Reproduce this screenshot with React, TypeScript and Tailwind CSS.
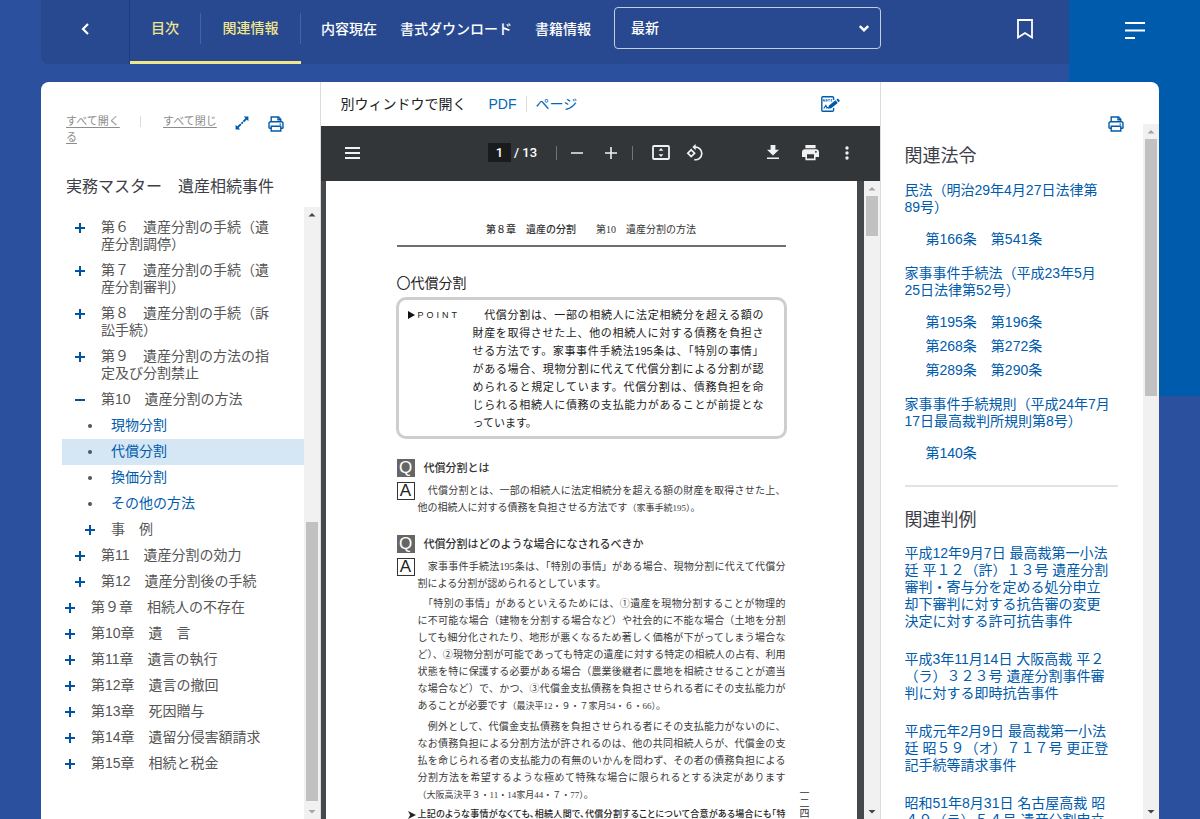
import React from "react";

const ui = "font-['Liberation_Sans','Noto_Sans_CJK_JP',sans-serif]";
const mincho = "font-['Liberation_Serif','Noto_Sans_CJK_JP',serif]";

function PrintIcon() {
  return (
    <svg width="16" height="16" viewBox="0 0 16 16" fill="none" stroke="#005bac" strokeWidth="1.4" aria-hidden="true">
      <path d="M3.2 5.8V1h7.4l2.200 2.200v2.600" />
      <path d="M10 1v2.800h2.600" />
      <path d="M3.200 12.200H1.800c-.5 0-.8-.3-.8-.8V7.600c0-1 .8-1.800 1.800-1.800h10.400c1 0 1.800.8 1.800 1.800v3.800c0 .5-.3.8-.8.800h-1.400" />
      <path d="M3.200 10.200h9.600V15H3.200z" />
      <path d="M11.600 8.200h1.200" />
    </svg>
  );
}

function ExpandIcon() {
  return (
    <svg width="14" height="14" viewBox="0 0 14 14" aria-hidden="true">
      <path d="M8.800.600h4.600v4.600zM.600 8.800v4.600h4.600z" fill="#005bac" />
      <path d="M2.500 11.500l9-9" stroke="#005bac" strokeWidth="1.800" strokeDasharray="4.800 .8 2 .8" fill="none" />
    </svg>
  );
}

function NoteIcon() {
  return (
    <svg width="20" height="16" viewBox="0 0 20 16" fill="none" aria-hidden="true">
      <path d="M12.600 4V2c0-.8-.5-1.200-1.200-1.200H1.800C1.200.8.8 1.200.8 1.800v12.400c0 .6.400 1 1 1h9.600c.7 0 1.200-.4 1.200-1.200V12" stroke="#005bac" strokeWidth="1.400" />
      <path d="M2.500 3.400v2M2.500 3.400l1.200 2v-2M5 3.600h1.200v1.600H5zM7.300 3.500h1.500M8 3.500v2M9.800 3.500h1.400M9.800 5.200h1.400M9.800 4.400h1" stroke="#005bac" strokeWidth=".7" />
      <path d="M2.800 12.500l2-3 1.200 2.400 1.600-.6" stroke="#005bac" strokeWidth="1.200" />
      <path d="M7 12.800l.9-3.300 6.600-5.200 2.300 2.700-6.600 5.200zM15.300 3.700l1-.8c.4-.3.800-.2 1.100.1l1.100 1.300c.3.400.3.800-.1 1.100l-.9.800z" fill="#005bac" />
    </svg>
  );
}

function PlusIcon({ minus = false }: { minus?: boolean }) {
  return (
    <svg width="10" height="10" viewBox="0 0 10 10" fill="none" stroke="#0053a0" strokeWidth="2" aria-hidden="true">
      <path d={minus ? "M0 5h10" : "M0 5h10M5 0v10"} />
    </svg>
  );
}

function Arrow({ up = false, dark = false }: { up?: boolean; dark?: boolean }) {
  return (
    <svg className="shrink-0" width="16" height="15" viewBox="0 0 16 15" aria-hidden="true">
      <path d={up ? "M4.500 9.500h7L8 6z" : "M4.500 6h7L8 9.500z"} fill={dark ? "#444" : "#a3a3a3"} />
    </svg>
  );
}

function ScrollTrack({
  before,
  size,
  upDark = false,
  downDark = false,
}: {
  before: number;
  size: number;
  upDark?: boolean;
  downDark?: boolean;
}) {
  return (
    <div className="flex w-4 shrink-0 flex-col bg-[#f1f1f1]" aria-hidden="true">
      <Arrow up dark={upDark} />
      <div className="min-h-0 flex-1 px-[2px]">
        <div style={{ height: `${before}%` }} />
        <div className="bg-[#c1c1c1]" style={{ height: `${size}%` }} />
      </div>
      <Arrow dark={downDark} />
    </div>
  );
}

type Node = { level: 0 | 1 | 2; text: string; kind: "plus" | "minus" | "leaf"; active?: boolean };

const toc: Node[] = [
  { level: 1, kind: "plus", text: "第６　遺産分割の手続（遺\n産分割調停）" },
  { level: 1, kind: "plus", text: "第７　遺産分割の手続（遺\n産分割審判）" },
  { level: 1, kind: "plus", text: "第８　遺産分割の手続（訴\n訟手続）" },
  { level: 1, kind: "plus", text: "第９　遺産分割の方法の指\n定及び分割禁止" },
  { level: 1, kind: "minus", text: "第10　遺産分割の方法" },
  { level: 2, kind: "leaf", text: "現物分割" },
  { level: 2, kind: "leaf", text: "代償分割", active: true },
  { level: 2, kind: "leaf", text: "換価分割" },
  { level: 2, kind: "leaf", text: "その他の方法" },
  { level: 2, kind: "plus", text: "事　例" },
  { level: 1, kind: "plus", text: "第11　遺産分割の効力" },
  { level: 1, kind: "plus", text: "第12　遺産分割後の手続" },
  { level: 0, kind: "plus", text: "第９章　相続人の不存在" },
  { level: 0, kind: "plus", text: "第10章　遺　言" },
  { level: 0, kind: "plus", text: "第11章　遺言の執行" },
  { level: 0, kind: "plus", text: "第12章　遺言の撤回" },
  { level: 0, kind: "plus", text: "第13章　死因贈与" },
  { level: 0, kind: "plus", text: "第14章　遺留分侵害額請求" },
  { level: 0, kind: "plus", text: "第15章　相続と税金" },
];

const indent = { 0: "pl-[3px]", 1: "pl-[13px]", 2: "pl-[23px]" };

function TocRow({ node }: { node: Node }) {
  const base = `flex w-full items-start gap-4 pt-1 pb-[5px] text-left ${indent[node.level]}`;
  if (node.kind === "leaf") {
    return (
      <a href="#" className={`${base} text-[#005bac] ${node.active ? "bg-[#d5e7f5]" : ""}`}>
        <span className="flex h-[17px] w-[10px] items-center justify-center">
          <span className="size-1 rounded-full bg-[#555]" />
        </span>
        <span className="whitespace-pre">{node.text}</span>
      </a>
    );
  }
  return (
    <button type="button" className={`${base} text-[#555]`}>
      <span className="flex h-[17px] items-center">
        <PlusIcon minus={node.kind === "minus"} />
      </span>
      <span className="whitespace-pre">{node.text}</span>
    </button>
  );
}

function Sidebar() {
  return (
    <aside className="flex w-1/4 shrink-0 flex-col border-r border-[#dcdcdc] pl-[21px]">
      <div className="flex items-start pt-[31px] pl-1 text-[11px] leading-[16px] text-[#8c8c8c]">
        <button type="button" className="h-8 w-[56px] text-left underline underline-offset-2">すべて開くる</button>
        <span className="mt-[3px] ml-[18px] h-[11px] w-px bg-[#ddd]" />
        <button type="button" className="ml-[22px] h-4 w-[56px] overflow-hidden text-left underline underline-offset-2">すべて閉じ</button>
        <button type="button" aria-label="拡大" className="mt-[3px] ml-[16px]"><ExpandIcon /></button>
        <button type="button" aria-label="目次を印刷" className="mt-[3px] ml-[19px]"><PrintIcon /></button>
      </div>
      <h1 className="mt-[30px] pl-1 text-[16px] leading-6 text-[#3e3e48]">実務マスター　遺産相続事件</h1>
      <div className="mt-[8px] flex min-h-0 flex-1">
        <nav aria-label="目次" className="min-w-0 flex-1 overflow-hidden pt-[8px] text-[14px] leading-[17px]">
          {toc.map((n) => (
            <TocRow key={n.text} node={n} />
          ))}
        </nav>
        <ScrollTrack before={51.500} size={48} upDark />
      </div>
    </aside>
  );
}

function Lines({ lines }: { lines: React.ReactNode[] }) {
  return (
    <p className="whitespace-nowrap">
      {lines.map((l, i) => (
        <span key={i} className={i < lines.length - 1 ? "block [text-align-last:justify]" : "block"}>
          {l}
        </span>
      ))}
    </p>
  );
}

function Question({ children }: { children: React.ReactNode }) {
  return (
    <h3 className="flex items-center gap-[9px] text-[11px] leading-[18px] font-medium text-[#333]">
      <span className={`flex size-[18px] items-center justify-center bg-[#666] text-[17px] leading-[18px] font-normal text-white ${ui}`}>Q</span>
      {children}
    </h3>
  );
}

function Answer({ children }: { children: React.ReactNode }) {
  return (
    <div className="mt-[5px] flex gap-[3px]">
      <span className={`flex size-[18px] shrink-0 items-center justify-center border border-[#333] text-[17px] leading-4 text-[#222] ${ui}`}>A</span>
      <div className={`flex min-w-0 flex-1 flex-col gap-[3px] text-[10px] leading-[17px] text-[#3a3a3a] ${mincho}`}>{children}</div>
    </div>
  );
}

const Cite = ({ children }: { children: React.ReactNode }) => <small className="text-[9px]">{children}</small>;

function PdfPage() {
  return (
    <article className="flex min-w-0 flex-1 overflow-hidden bg-white pl-[71px]">
      <div className="min-w-0 flex-1 pt-[41px]">
        <header className="flex items-center justify-center gap-5 border-b-2 border-[#6f6f6f] pb-[7px] text-[10px] leading-4 text-[#333]">
          <span className="font-medium">第８章　遺産の分割</span>
          <span className={mincho}>第10　遺産分割の方法</span>
        </header>
        <h2 className="mt-[26px] text-[14px] leading-5 text-[#222]">〇代償分割</h2>
        <section className="-mx-px mt-1 flex rounded-[10px] border-3 border-[#cdcfcf] pt-[6px] pr-5 pb-1 pl-[9px] text-[11px] leading-[18px] text-[#222]">
          <h3 className="flex w-[65px] shrink-0 items-center gap-[3px] self-start text-[9px] tracking-[3px]">
            <svg width="7" height="8" viewBox="0 0 7 8" aria-hidden="true"><path d="M0 0l7 4-7 4z" fill="#111" /></svg>
            POINT
          </h3>
          <div className="min-w-0 flex-1">
            <Lines
              lines={[
                "　代償分割は、一部の相続人に法定相続分を超える額の",
                "財産を取得させた上、他の相続人に対する債務を負担さ",
                "せる方法です。家事事件手続法195条は、「特別の事情」",
                "がある場合、現物分割に代えて代償分割による分割が認",
                "められると規定しています。代償分割は、債務負担を命",
                "じられる相続人に債務の支払能力があることが前提とな",
                "っています。",
              ]}
            />
          </div>
        </section>
        <section className="mt-[20px]">
          <Question>代償分割とは</Question>
          <Answer>
            <Lines
              lines={[
                "　代償分割とは、一部の相続人に法定相続分を超える額の財産を取得させた上、",
                <>他の相続人に対する債務を負担させる方法です<Cite>（家事手続195）</Cite>。</>,
              ]}
            />
          </Answer>
        </section>
        <section className="mt-[18px]">
          <Question>代償分割はどのような場合になされるべきか</Question>
          <Answer>
            <Lines
              lines={[
                "　家事事件手続法195条は、「特別の事情」がある場合、現物分割に代えて代償分",
                "割による分割が認められるとしています。",
              ]}
            />
            <Lines
              lines={[
                "　「特別の事情」があるといえるためには、①遺産を現物分割することが物理的",
                "に不可能な場合（建物を分割する場合など）や社会的に不能な場合（土地を分割",
                "しても細分化されたり、地形が悪くなるため著しく価格が下がってしまう場合な",
                "ど）、②現物分割が可能であっても特定の遺産に対する特定の相続人の占有、利用",
                "状態を特に保護する必要がある場合（農業後継者に農地を相続させることが適当",
                "な場合など）で、かつ、③代償金支払債務を負担させられる者にその支払能力が",
                <>あることが必要です<Cite>（最決平12・９・７家月54・６・66）</Cite>。</>,
              ]}
            />
            <Lines
              lines={[
                "　例外として、代償金支払債務を負担させられる者にその支払能力がないのに、",
                "なお債務負担による分割方法が許されるのは、他の共同相続人らが、代償金の支",
                "払を命じられる者の支払能力の有無のいかんを問わず、その者の債務負担による",
                "分割方法を希望するような極めて特殊な場合に限られるとする決定があります",
                <><Cite>（大阪高決平３・11・14家月44・７・77）</Cite>。</>,
              ]}
            />
          </Answer>
          <p className="mt-[2px] flex items-center gap-[2px] pl-[11px] text-[9px] leading-[17px] font-medium whitespace-nowrap text-[#222]">
            <svg className="shrink-0" width="8" height="8" viewBox="0 0 8 8" aria-hidden="true"><path d="M0 0l8 4-8 4 2.200-4z" fill="#222" /></svg>
            <span className="flex-1 [font-feature-settings:'palt'] [text-align-last:justify]">
              上記のような事情がなくても、相続人間で、代償分割することについて合意がある場合にも「特
            </span>
          </p>
        </section>
      </div>
      <div className={`flex w-[71px] shrink-0 flex-col pt-[608px] pl-[14px] text-[10px] leading-[10px] text-[#333] ${mincho}`}>
        <span>一</span>
        <span>二</span>
        <span>四</span>
      </div>
    </article>
  );
}

function PdfToolbar() {
  return (
    <div className="grid h-[55px] shrink-0 grid-cols-[1fr_auto_1fr] items-center bg-[#323639] px-[23px] pb-[2px] text-white">
      <button type="button" aria-label="メニュー" className="justify-self-start">
        <svg width="17" height="14" viewBox="0 0 17 14" fill="none" stroke="#f1f1f1" strokeWidth="2"><path d="M1 2h15M1 7h15M1 12h15" /></svg>
      </button>
      <div className="flex items-center pr-[8px] font-[Roboto,sans-serif]">
        <input aria-label="ページ番号" defaultValue="1" className="h-[19px] w-[23px] bg-[#191b1c] text-center text-[13px] font-medium" />
        <span className="ml-[3px] w-[26px] text-[13px] font-medium whitespace-nowrap">/ 13</span>
        <span className="ml-4 h-[14px] w-px bg-[#70757a]" />
        <button type="button" aria-label="縮小" className="ml-[14px]">
          <svg width="12" height="12" viewBox="0 0 12 12" stroke="#f1f1f1" strokeWidth="1.600"><path d="M0 6h12" /></svg>
        </button>
        <button type="button" aria-label="拡大表示" className="ml-[22px]">
          <svg width="12" height="12" viewBox="0 0 12 12" stroke="#f1f1f1" strokeWidth="1.600"><path d="M0 6h12M6 0v12" /></svg>
        </button>
        <span className="ml-[15px] h-[14px] w-px bg-[#70757a]" />
        <button type="button" aria-label="ページに合わせる" className="ml-[19px]">
          <svg width="18" height="15" viewBox="0 0 18 15"><rect x="1" y="1" width="16" height="13" rx="1" fill="none" stroke="#f1f1f1" strokeWidth="1.800" /><path d="M9 3l2.400 2.800H6.600zM9 12l2.400-2.800H6.600z" fill="#f1f1f1" /></svg>
        </button>
        <button type="button" aria-label="回転" className="ml-4">
          <svg width="18" height="18" viewBox="0 0 18 18" fill="none" stroke="#f1f1f1" strokeWidth="1.700"><path d="M5.200 5.800L8.600 9.200 5.200 12.600 1.800 9.200z" /><path d="M8.500 3.200a6.300 6.300 0 1 1-.2 12.400" /><path d="M9.600 0v6.200L6.400 3.100z" fill="#f1f1f1" stroke="none" /></svg>
        </button>
      </div>
      <div className="flex items-center justify-self-end">
        <button type="button" aria-label="ダウンロード">
          <svg width="12" height="15" viewBox="0 0 12 15" fill="#f1f1f1"><path d="M3.600 0h4.800v4.800H12L6 10.600 0 4.800h3.600zM0 12.400h12V14H0z" /></svg>
        </button>
        <button type="button" aria-label="印刷" className="ml-[23px]">
          <svg width="17" height="16" viewBox="0 0 17 16"><path d="M3.400 0h10.200v3.200H3.400zM14.200 4.300H2.800C1.200 4.300 0 5.500 0 7v5h3.400v3.300h10.200V12H17V7c0-1.500-1.200-2.700-2.800-2.700zM12 13.600H5V9.200h7zm2.200-5.900a.9.900 0 1 1 0-1.700.9.900 0 0 1 0 1.700z" fill="#f1f1f1" /></svg>
        </button>
        <button type="button" aria-label="その他の操作" className="ml-[26px] pr-[8px]">
          <svg width="4" height="14" viewBox="0 0 4 14" fill="#f1f1f1"><circle cx="2" cy="2" r="1.700" /><circle cx="2" cy="7" r="1.700" /><circle cx="2" cy="12" r="1.700" /></svg>
        </button>
      </div>
    </div>
  );
}

function Viewer() {
  return (
    <main className="flex min-w-0 flex-1 flex-col">
      <div className="flex h-[44px] shrink-0 items-center pr-[39px] pl-5 text-[14px] text-[#222]">
        <span>別ウィンドウで開く</span>
        <a href="#" className="ml-[22px] text-[#0068b7]">PDF</a>
        <span className="mx-[9px] h-4 w-px bg-[#ddd]" />
        <a href="#" className="text-[#0068b7]">ページ</a>
        <button type="button" aria-label="メモを編集" className="ml-auto"><NoteIcon /></button>
      </div>
      <PdfToolbar />
      <div className="flex min-h-0 flex-1 bg-[#45494c]">
        <div className="flex min-w-0 flex-1 pr-[7px] pl-[5px]">
          <PdfPage />
        </div>
        <ScrollTrack before={0} size={6.500} downDark />
      </div>
    </main>
  );
}

const laws = [
  { title: "民法（明治29年4月27日法律第\n89号）", rows: [["第166条", "第541条"]] },
  { title: "家事事件手続法（平成23年5月\n25日法律第52号）", rows: [["第195条", "第196条"], ["第268条", "第272条"], ["第289条", "第290条"]] },
  { title: "家事事件手続規則（平成24年7月\n17日最高裁判所規則第8号）", rows: [["第140条"]] },
];

const cases = [
  "平成12年9月7日 最高裁第一小法\n廷 平１２（許）１３号 遺産分割\n審判・寄与分を定める処分申立\n却下審判に対する抗告審の変更\n決定に対する許可抗告事件",
  "平成3年11月14日 大阪高裁 平２\n（ラ）３２３号 遺産分割事件審\n判に対する即時抗告事件",
  "平成元年2月9日 最高裁第一小法\n廷 昭５９（オ）７１７号 更正登\n記手続等請求事件",
  "昭和51年8月31日 名古屋高裁 昭\n４９（ラ）５４号 遺産分割申立",
];

function Related() {
  return (
    <aside className="flex w-1/4 shrink-0 flex-col border-l border-[#dcdcdc]">
      <div className="flex justify-end pt-[34px] pr-[35px]">
        <button type="button" aria-label="関連情報を印刷" className="-mb-2"><PrintIcon /></button>
      </div>
      <div className="flex min-h-0 flex-1">
        <div className="min-w-0 flex-1 overflow-hidden pt-[20px] pr-[25px] pl-6 text-[14px] leading-[17px] text-[#005bac]">
          <h2 className="text-[18px] leading-6 text-[#3e3e48]">関連法令</h2>
          <ul className="mt-[14px] flex flex-col gap-[14px]">
            {laws.map((law) => (
              <li key={law.title}>
                <a href="#" className="block whitespace-pre">{law.title}</a>
                <div className="mt-[11px] pl-[21px] leading-6">
                  {law.rows.map((row) => (
                    <div key={row[0]} className="flex gap-[14px]">
                      {row.map((a) => (
                        <a key={a} href="#">{a}</a>
                      ))}
                    </div>
                  ))}
                </div>
              </li>
            ))}
          </ul>
          <hr className="mt-[20px] border-t-2 border-[#e3e3e3]" />
          <h2 className="mt-[21px] text-[18px] leading-6 text-[#3e3e48]">関連判例</h2>
          <ul className="mt-[13px] flex flex-col gap-[21px]">
            {cases.map((c) => (
              <li key={c}>
                <a href="#" className="block whitespace-pre">{c}</a>
              </li>
            ))}
          </ul>
        </div>
        <ScrollTrack before={0} size={38.700} downDark />
      </div>
    </aside>
  );
}

function TopBar() {
  return (
    <div className="flex h-[64px] shrink-0 pl-[41px] text-[14px] font-medium text-white">
      <header className="flex min-w-0 flex-1 rounded-bl-lg bg-[#28498f]">
        <button type="button" aria-label="戻る" className="flex w-[89px] items-center justify-center border-r border-[#1e3b7c] pb-[7px]">
          <svg width="8" height="12" viewBox="0 0 8 12" fill="none" stroke="#fff" strokeWidth="2.200"><path d="M7 1L2 6l5 5" /></svg>
        </button>
        <nav className="flex items-start border-b-3 border-[#f0e68c] pt-[13px] text-[#f0e68c]">
          <a href="#" className="flex h-[31px] w-[71px] items-center justify-center border-r border-[#4463a2]">目次</a>
          <a href="#" className="flex h-[31px] w-[100px] items-center justify-center border-r border-[#4463a2]">関連情報</a>
        </nav>
        <nav className="flex h-[58px] items-center gap-[23px] pl-5 whitespace-nowrap">
          <a href="#">内容現在</a>
          <a href="#">書式ダウンロード</a>
          <a href="#">書籍情報</a>
        </nav>
        <div className="mt-[7px] ml-[23px] grid h-[42px] w-[267px] items-center">
          <select aria-label="版" className="col-start-1 row-start-1 h-full w-full appearance-none rounded border border-[#c5cde0] bg-transparent px-4">
            <option>最新</option>
          </select>
          <svg className="pointer-events-none col-start-1 row-start-1 mr-3 justify-self-end" width="10" height="7" viewBox="0 0 10 7" fill="none" stroke="#fff" strokeWidth="2.400"><path d="M.800 1L5 5.200 9.200 1" /></svg>
        </div>
        <button type="button" aria-label="ブックマーク" className="mr-[36px] mb-[7px] ml-auto">
          <svg width="16" height="20" viewBox="0 0 16 20" fill="none" stroke="#fff" strokeWidth="1.800"><path d="M1 1h14v17.500l-7-4.500-7 4.500z" /></svg>
        </button>
      </header>
      <button type="button" aria-label="メインメニュー" className="flex w-[131px] items-center justify-center pb-[4px]">
        <svg width="20" height="19" viewBox="0 0 20 19" stroke="#fff" strokeWidth="1.800"><path d="M0 2h20M0 9.500h20M0 17h10" /></svg>
      </button>
    </div>
  );
}

export default function App() {
  return (
    <div
      lang="ja"
      className={`flex h-screen flex-col overflow-hidden bg-[#2b509d] bg-[linear-gradient(#005bac,#005bac)] bg-[length:131px_396px] bg-right-top bg-no-repeat ${ui}`}
    >
      <TopBar />
      <div className="mx-[41px] mt-[18px] flex min-h-0 flex-1 overflow-hidden rounded-t-lg bg-white">
        <Sidebar />
        <Viewer />
        <Related />
      </div>
    </div>
  );
}
